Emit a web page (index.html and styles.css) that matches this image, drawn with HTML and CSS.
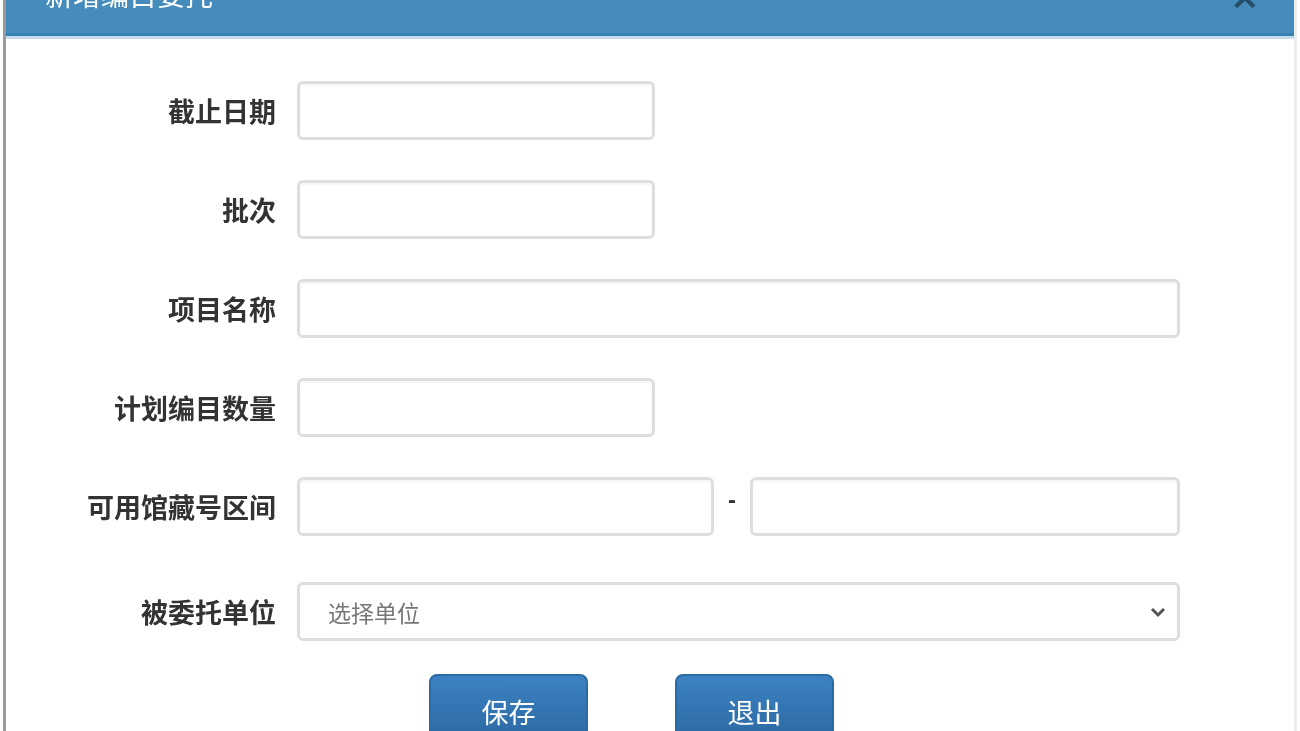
FILE: index.html
```html
<!DOCTYPE html>
<html lang="zh-CN">
<head>
<meta charset="utf-8">
<title>新增编目委托</title>
<link rel="stylesheet" href="styles.css">
</head>
<body>
<div class="modal">
  <div class="modal-header">
    <h4 class="modal-title">新增编目委托</h4>
    <button class="close" type="button">×</button>
  </div>
  <div class="modal-body">
    <form class="form">
      <div class="row">
        <label class="label">截止日期</label>
        <input class="input short" type="text">
      </div>
      <div class="row">
        <label class="label">批次</label>
        <input class="input short" type="text">
      </div>
      <div class="row">
        <label class="label">项目名称</label>
        <input class="input long" type="text">
      </div>
      <div class="row">
        <label class="label">计划编目数量</label>
        <input class="input short" type="text">
      </div>
      <div class="row">
        <label class="label">可用馆藏号区间</label>
        <input class="input range-a" type="text">
        <span class="dash">-</span>
        <input class="input range-b" type="text">
      </div>
      <div class="row row-select">
        <label class="label">被委托单位</label>
        <div class="select">
          <span class="placeholder">选择单位</span>
          <svg class="chevron" width="16" height="12" viewBox="0 0 16 12"><polyline points="2,3 8,9 14,3" fill="none" stroke="#555" stroke-width="3"/></svg>
        </div>
      </div>
    </form>
    <div class="actions">
      <button class="btn" type="button">保存</button>
      <button class="btn" type="button">退出</button>
    </div>
  </div>
</div>
</body>
</html>
```
FILE: styles.css
```css
html, body {
  margin: 0;
  padding: 0;
  background: #fff;
  height: 731px;
  overflow: hidden;
}
body {
  font-family: "Liberation Sans", "Noto Sans CJK SC", sans-serif;
  padding-left: 3px;
}
.modal {
  width: 1294px;
  box-sizing: border-box;
  margin-top: -40px;
  border-left: 3px solid #9a9a9a;
  border-right: 3px solid #ececec;
  background: #fff;
  filter: blur(0.5px);
}
.modal-header {
  height: 73px;
  background: #458cbc;
  border-bottom: 3px solid #3680b3;
  box-shadow: 0 3px 0 #c6dcec;
  display: flex;
  align-items: center;
  justify-content: space-between;
  padding: 0 34px 0 39px;
}
.modal-title {
  margin: 0;
  font-size: 28px;
  font-weight: normal;
  color: #fff;
  line-height: 30px;
}
.close {
  background: none;
  border: none;
  padding: 0;
  font-family: "DejaVu Sans", sans-serif;
  font-size: 36px;
  font-weight: bold;
  line-height: 30px;
  color: rgba(0, 0, 0, 0.45);
}
.modal-body {
  padding-top: 45px;
}
.form {
  display: flex;
  flex-direction: column;
  gap: 40px;
  margin: 0;
}
.row {
  display: flex;
  align-items: center;
  height: 59px;
}
.row-select {
  margin-top: 6px;
}
.label {
  width: 270px;
  margin-right: 21px;
  text-align: right;
  font-size: 27px;
  font-weight: bold;
  color: #333;
}
.input {
  box-sizing: border-box;
  height: 59px;
  border: 3px solid #dedede;
  border-radius: 6px;
  box-shadow: inset 0 2px 2px rgba(0, 0, 0, 0.04);
  background: #fff;
  padding: 0 12px;
  font-size: 24px;
}
.short { width: 358px; }
.long { width: 883px; }
.range-a { width: 417px; }
.range-b { width: 430px; }
.dash {
  width: 36px;
  text-align: center;
  font-size: 24px;
  font-weight: bold;
  color: #333;
  margin-top: -14px;
}
.select {
  box-sizing: border-box;
  width: 883px;
  height: 59px;
  border: 3px solid #dedede;
  border-radius: 6px;
  display: flex;
  align-items: center;
  justify-content: space-between;
  padding: 0 11px 0 28px;
}
.placeholder {
  font-size: 23px;
  color: #777;
}
.actions {
  display: flex;
  gap: 87px;
  padding-left: 423px;
  margin-top: 33px;
}
.btn {
  width: 159px;
  height: 74px;
  border: 2px solid #2c6aa3;
  border-radius: 8px;
  background: linear-gradient(#3c82c2, #2a67a0);
  color: #fff;
  font-family: "Liberation Sans", "Noto Sans CJK SC", sans-serif;
  font-size: 27px;
  padding: 0;
}
```
